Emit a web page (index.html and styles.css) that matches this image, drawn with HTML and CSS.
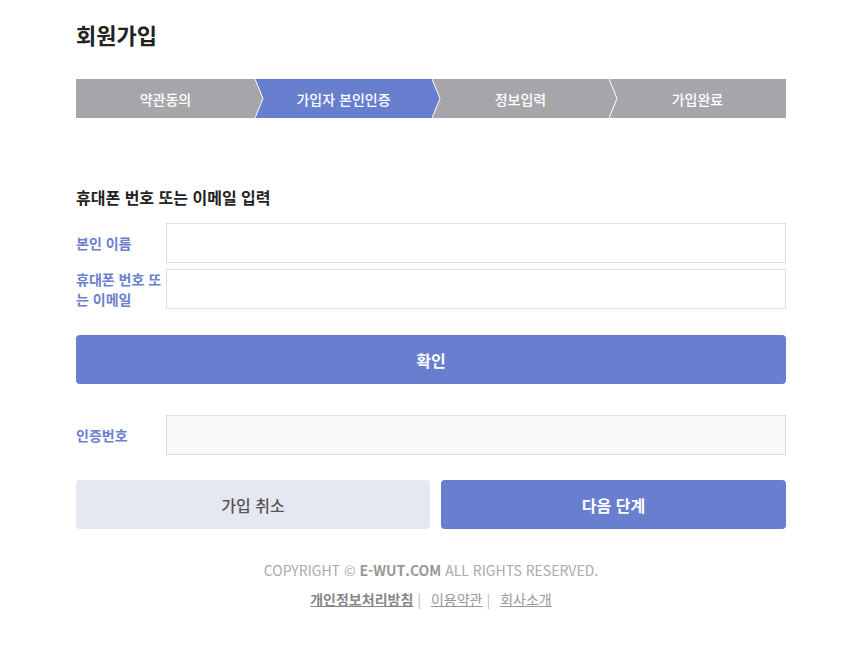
FILE: index.html
```html
<!DOCTYPE html>
<html lang="ko">
<head>
    <meta charset="UTF-8">
    <meta name="viewport" content="width=device-width, initial-scale=1.0">
    <title>회원가입</title>
    <link rel="stylesheet" href="styles.css">
</head>
<body>
    <div class="wrap">
        <h1 class="page-title">회원가입</h1>

        <ol class="steps">
            <li class="step">약관동의
                <svg class="chev" viewBox="0 0 10 39" preserveAspectRatio="none"><polygon points="0,0 8,19.5 0,39"/><polyline points="0,0 8,19.5 0,39"/></svg>
            </li>
            <li class="step active">가입자 본인인증
                <svg class="chev" viewBox="0 0 10 39" preserveAspectRatio="none"><polygon points="0,0 8,19.5 0,39"/><polyline points="0,0 8,19.5 0,39"/></svg>
            </li>
            <li class="step">정보입력
                <svg class="chev" viewBox="0 0 10 39" preserveAspectRatio="none"><polygon points="0,0 8,19.5 0,39"/><polyline points="0,0 8,19.5 0,39"/></svg>
            </li>
            <li class="step">가입완료</li>
        </ol>

        <h2 class="section-title">휴대폰 번호 또는 이메일 입력</h2>

        <div class="field">
            <label class="field-label" for="name">본인 이름</label>
            <input class="field-input" id="name" type="text">
        </div>
        <div class="field">
            <label class="field-label" for="contact">휴대폰 번호 또는 이메일</label>
            <input class="field-input" id="contact" type="text">
        </div>

        <button class="btn btn-primary btn-full" type="button">확인</button>

        <div class="field field-code">
            <label class="field-label" for="code">인증번호</label>
            <input class="field-input" id="code" type="text" disabled>
        </div>

        <div class="actions">
            <button class="btn btn-light" type="button">가입 취소</button>
            <button class="btn btn-primary" type="button">다음 단계</button>
        </div>

        <footer class="footer">
            <p class="copyright">COPYRIGHT © <strong>E-WUT.COM</strong> ALL RIGHTS RESERVED.</p>
            <p class="footer-links">
                <a href="#" class="strong">개인정보처리방침</a><span class="sep">|</span>
                <a href="#">이용약관</a><span class="sep">|</span>
                <a href="#">회사소개</a>
            </p>
        </footer>
    </div>
</body>
</html>
```

FILE: styles.css
```css
body {
    margin: 0;
    background: #fff;
    font-family: "Noto Sans CJK KR", "Noto Sans", sans-serif;
    color: #222;
}
.wrap {
    width: 710px;
    margin-left: 76px;
}
.page-title {
    margin: 0;
    padding-top: 19px;
    font-size: 22px;
    line-height: 30px;
    font-weight: bold;
    color: #222;
}
.steps {
    display: flex;
    list-style: none;
    margin: 30px 0 0;
    padding: 0;
    height: 39px;
    background: #a6a6aa;
}
.step {
    position: relative;
    flex: 1;
    display: flex;
    align-items: center;
    justify-content: center;
    color: #fff;
    font-size: 14px;
    font-weight: 500;
    background: #a6a6aa;
}
.step:first-child { flex: 0 0 179px; }
.step.active { background: #687ecf; }
.chev {
    position: absolute;
    top: 0;
    left: 100%;
    width: 10px;
    height: 39px;
    z-index: 1;
}
.chev polygon { fill: #a6a6aa; }
.active .chev polygon { fill: #687ecf; }
.chev polyline {
    fill: none;
    stroke: #fff;
    stroke-width: 1;
    vector-effect: non-scaling-stroke;
}
.section-title {
    margin: 68px 0 15px;
    font-size: 16px;
    line-height: 22px;
    font-weight: bold;
    color: #222;
}
.field {
    display: flex;
    align-items: center;
    margin-bottom: 6px;
}
.field-label {
    flex: 0 0 90px;
    font-size: 14px;
    line-height: 20px;
    font-weight: bold;
    color: #6a7fcf;
    padding-right: 4px;
    box-sizing: border-box;
}
.field-input {
    flex: 1;
    height: 40px;
    box-sizing: border-box;
    border: 1px solid #ddd;
    background: #fff;
    margin: 0;
    padding: 0 10px;
    font: inherit;
}
.field-input:disabled { background: #f9f9f9; }
.field-code { margin-top: 31px; }
.btn {
    display: block;
    height: 49px;
    border: 0;
    border-radius: 4px;
    font-family: inherit;
    font-size: 16px;
    cursor: pointer;
}
.btn-primary {
    background: #687ecf;
    color: #fff;
    font-weight: bold;
}
.btn-light {
    background: #e5e7f3;
    color: #555;
    font-weight: 500;
}
.btn-full {
    width: 100%;
    margin-top: 26px;
}
.actions {
    display: flex;
    gap: 11px;
    margin-top: 25px;
}
.actions .btn { flex: 1; }
.actions .btn-light { flex: 0 0 354px; }
.footer {
    text-align: center;
    margin-top: 30px;
}
.copyright {
    margin: 0;
    font-size: 14px;
    line-height: 22px;
    color: #aaa;
}
.copyright strong { color: #999; }
.footer-links {
    margin: 8px 0 0;
    font-size: 14px;
    line-height: 20px;
    color: #bbb;
}
.footer-links a {
    color: #999;
    text-decoration: underline;
}
.footer-links a.strong {
    font-weight: bold;
    color: #888;
}
.sep { margin: 0 6px 0 4px; }
```
